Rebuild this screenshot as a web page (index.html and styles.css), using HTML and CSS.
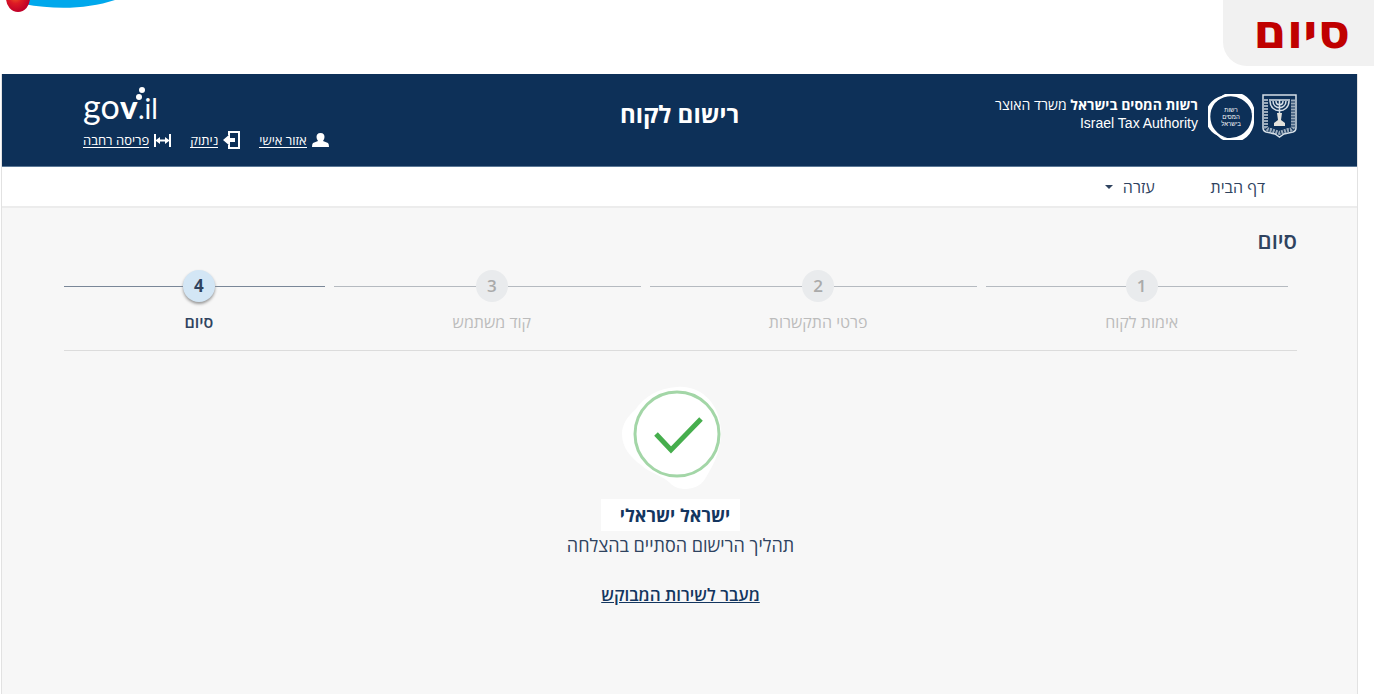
FILE: index.html
```
<!DOCTYPE html>
<html lang="he" dir="rtl">
<head>
    <meta charset="UTF-8">
    <meta name="viewport" content="width=device-width, initial-scale=1.0">
    <title>רישום לקוח</title>
    <link rel="stylesheet" href="styles.css">
</head>
<body>
    <div class="slide-top">
        <h1 class="slide-title">סיום</h1>
        <svg class="swoosh" width="120" height="13" viewBox="0 0 120 13" aria-hidden="true">
            <defs>
                <radialGradient id="ball" cx="0.4" cy="0.4" r="0.6">
                    <stop offset="0" stop-color="#ee7020"/>
                    <stop offset="0.5" stop-color="#dd1a25"/>
                    <stop offset="1" stop-color="#c00028"/>
                </radialGradient>
            </defs>
            <path d="M20 0H115C88 9 55 10 24 4z" fill="#00a8ec"/>
            <ellipse cx="18" cy="-2" rx="12" ry="14" fill="url(#ball)"/>
        </svg>
    </div>

    <div class="panel">
        <header class="header">
            <div class="brand">
                <svg width="35" height="44" viewBox="0 0 35 44" fill="none" stroke="#d5dee6" aria-hidden="true">
                    <path d="M1 1H34V34Q34 37 31 38L22 40L17.500 43L13 40L4 38Q1 37 1 34z" stroke-width="1.500"/>
                    <path d="M4 5V33Q5 36 9 36L17.500 39L26 36Q30 36 31 33V5" stroke-width="4" stroke-dasharray="2 1" opacity="0.7"/>
                    <path d="M7 6H28M8 7C8 20 27 20 27 7M11 7C11 16 24 16 24 7M14 7C14 12 21 12 21 7M17.500 6V28" stroke-width="1.500"/>
                    <path d="M15 19H20L19 26L23 29V32H12V29L16 26z" fill="#e4e2dc" stroke="none"/>
                </svg>
                <svg class="tax-logo" width="46" height="46" viewBox="0 0 46 46" aria-hidden="true">
                    <g fill="#fff">
                        <path d="M7 9A22 22 0 0 1 44 30A20 20 0 0 0 7 9z"/>
                        <path d="M7 9A22 22 0 0 1 44 30A20 20 0 0 0 7 9z" transform="rotate(120 23 23)"/>
                        <path d="M7 9A22 22 0 0 1 44 30A20 20 0 0 0 7 9z" transform="rotate(240 23 23)"/>
                        <g class="tax-logo-text">
                            <text x="23" y="18">רשות</text>
                            <text x="23" y="25">המסים</text>
                            <text x="23" y="32">בישראל</text>
                        </g>
                    </g>
                </svg>
                <div class="brand-text">
                    <div><b>רשות המסים בישראל</b> משרד האוצר</div>
                    <div class="brand-en" dir="ltr">Israel Tax Authority</div>
                </div>
            </div>

            <h2 class="header-title">רישום לקוח</h2>

            <div class="tools">
                <svg class="gov-logo" width="80" height="44" viewBox="0 0 80 44" fill="#fff" role="img">
                    <text x="0" y="33" font-size="34">go</text>
                    <text x="37" y="33" font-size="33" font-weight="900">v</text>
                    <text x="55" y="33" font-size="28">.il</text>
                    <circle cx="56" cy="11" r="3"/>
                    <circle cx="59" cy="4" r="3"/>
                </svg>
                <nav class="tool-links">
                    <a href="#">
                        <svg width="17" height="16" viewBox="0 0 17 16" fill="#fff" aria-hidden="true">
                            <path d="M8.500 1C5.500 1 4.500 3 4.500 5Q4.500 7 6 9L1 11Q0 12 0 15H17Q17 12 16 11L11 9Q12.500 7 12.500 5C12.500 3 11.500 1 8.500 1z"/>
                        </svg>
                        <span>אזור אישי</span>
                    </a>
                    <a href="#">
                        <svg width="17" height="20" viewBox="0 0 17 20" fill="none" stroke="#fff" aria-hidden="true">
                            <path d="M6 5V2H16V18H6V15" stroke-width="2"/>
                            <path d="M0 10L7 4V8H12V12H7V16z" fill="#fff" stroke="none"/>
                        </svg>
                        <span>ניתוק</span>
                    </a>
                    <a href="#">
                        <svg width="17" height="13" viewBox="0 0 17 13" fill="#fff" aria-hidden="true">
                            <path d="M0 0H2V6L6 3V5.500H11V3L15 6V0H17V13H15V7L11 10V7.500H6V10L2 7V13H0z"/>
                        </svg>
                        <span>פריסה רחבה</span>
                    </a>
                </nav>
            </div>
        </header>

        <nav class="menu">
            <a href="#">דף הבית</a>
            <a href="#">עזרה <span class="caret"></span></a>
        </nav>

        <main class="content">
            <h3 class="page-title">סיום</h3>

            <ol class="steps">
                <li class="step"><div class="step-head"><span class="num">1</span></div><div class="step-label">אימות לקוח</div></li>
                <li class="step"><div class="step-head"><span class="num">2</span></div><div class="step-label">פרטי התקשרות</div></li>
                <li class="step"><div class="step-head"><span class="num">3</span></div><div class="step-label">קוד משתמש</div></li>
                <li class="step active"><div class="step-head"><span class="num">4</span></div><div class="step-label">סיום</div></li>
            </ol>

            <section class="result">
                <svg width="118" height="108" viewBox="0 0 118 108" fill="none" aria-hidden="true">
                    <path d="M55 2C80 0 99 20 99 48C99 68 90 82 83 94C76 106 56 107 48 98C40 90 27 88 19 80C8 72 0 62 0 49C0 39 6 31 13 25C22 12 36 3 55 2z" fill="#fff"/>
                    <circle cx="55" cy="49" r="42" stroke="#a3d6a7" stroke-width="3"/>
                    <path d="M34 49L49 65L79 34" stroke="#46ae4d" stroke-width="5"/>
                </svg>
                <strong class="name">ישראל ישראלי</strong>
                <p>תהליך הרישום הסתיים בהצלחה</p>
                <a href="#">מעבר לשירות המבוקש</a>
            </section>
        </main>
    </div>
</body>
</html>
```
FILE: styles.css
```
* { box-sizing: border-box; }
body { margin: 0; min-height: 100vh; display: flex; flex-direction: column; background: #fff; color: #2f435f; font-family: "Open Sans", "Noto Sans", sans-serif; }
h1, h2, h3, p, ol { margin: 0; padding: 0; }
svg { display: block; flex: none; }

.slide-top { display: flex; justify-content: space-between; align-items: flex-start; height: 74px; }
.slide-title { height: 66px; padding: 0 24px 0 30px; border-radius: 0 0 0 24px; background: #f1f1f1; color: #c00000; font-family: "DejaVu Sans", sans-serif; font-size: 48px; line-height: 62px; }

.panel { flex: 1; display: flex; flex-direction: column; margin: 0 16px 0 1px; border: 1px solid #e2e2e2; border-width: 0 1px; background: #f7f7f7; }
.header { display: grid; grid-template-columns: 1fr auto 1fr; height: 93px; padding: 0 60px; background: #0d3058; border-bottom: 1px solid #5b7896; color: #fff; }
.brand { display: flex; align-items: flex-start; padding-top: 20px; }
.tax-logo { margin: 0 8px 0 10px; }
.tax-logo-text { font-family: "Liberation Sans", sans-serif; font-size: 6px; text-anchor: middle; }
.brand-text { padding-top: 2px; font-size: 14px; line-height: 18px; white-space: nowrap; }
.brand-en { font-family: "Liberation Sans", sans-serif; text-align: right; }
.header-title { font-size: 24px; line-height: 80px; }
.tools { justify-self: end; margin-left: 21px; padding-top: 12px; }
.gov-logo { direction: ltr; margin-right: auto; overflow: visible; font-family: Lato, sans-serif; }
.tool-links { display: flex; gap: 19px; height: 20px; }
.tool-links a { display: flex; align-items: center; gap: 5px; color: #fff; font-size: 13px; text-decoration: none; }
.tool-links span { border-bottom: 1px solid #fff; line-height: 14px; }

.menu { display: flex; gap: 56px; height: 41px; padding: 0 92px; background: #fff; border-bottom: 2px solid #ececec; }
.menu a { color: #2f435f; font-size: 16px; line-height: 40px; text-decoration: none; }
.caret { display: inline-block; margin-right: 6px; border: 4px solid transparent; border-top-color: #2f435f; border-bottom: 0; vertical-align: 4px; }

.content { padding: 18px 60px 0 62px; }
.page-title { font-size: 22px; font-weight: 600; line-height: 28px; }
.steps { display: flex; height: 97px; padding-top: 16px; border-bottom: 1px solid #dcdcdc; list-style: none; }
.step { flex: 1 1 auto; color: #bcbcbc; text-align: center; }
.step-head { display: grid; grid-template-columns: 1fr 32px 1fr; align-items: center; }
.step-head::before, .step-head::after { content: ""; border-top: 1px solid #b5bac0; }
.step-head::before { justify-self: end; width: calc(100% - 9px); }
.num { height: 32px; border-radius: 50%; background: #e9ebed; color: #aaa; font-size: 17px; font-weight: 600; line-height: 32px; }
.step-label { margin-top: 9px; font-size: 16px; line-height: 22px; }
.active { color: #2f435f; font-weight: 600; }
.active .num { background: #d3e6f5; color: #2f435f; font-weight: 700; box-shadow: 0 2px 3px #999; }
.active .step-head::before, .active .step-head::after { border-color: #7a8798; }

.result { display: flex; flex-direction: column; align-items: center; padding-top: 34px; }
.name { margin-top: 6px; margin-right: 20px; padding: 0 10px 0 19px; background: #fff; color: #14365f; font-size: 18px; line-height: 32px; }
.result p { font-size: 18px; line-height: 28px; }
.result a { margin-top: 22px; color: #14365f; font-size: 17px; font-weight: 600; line-height: 28px; }
```
